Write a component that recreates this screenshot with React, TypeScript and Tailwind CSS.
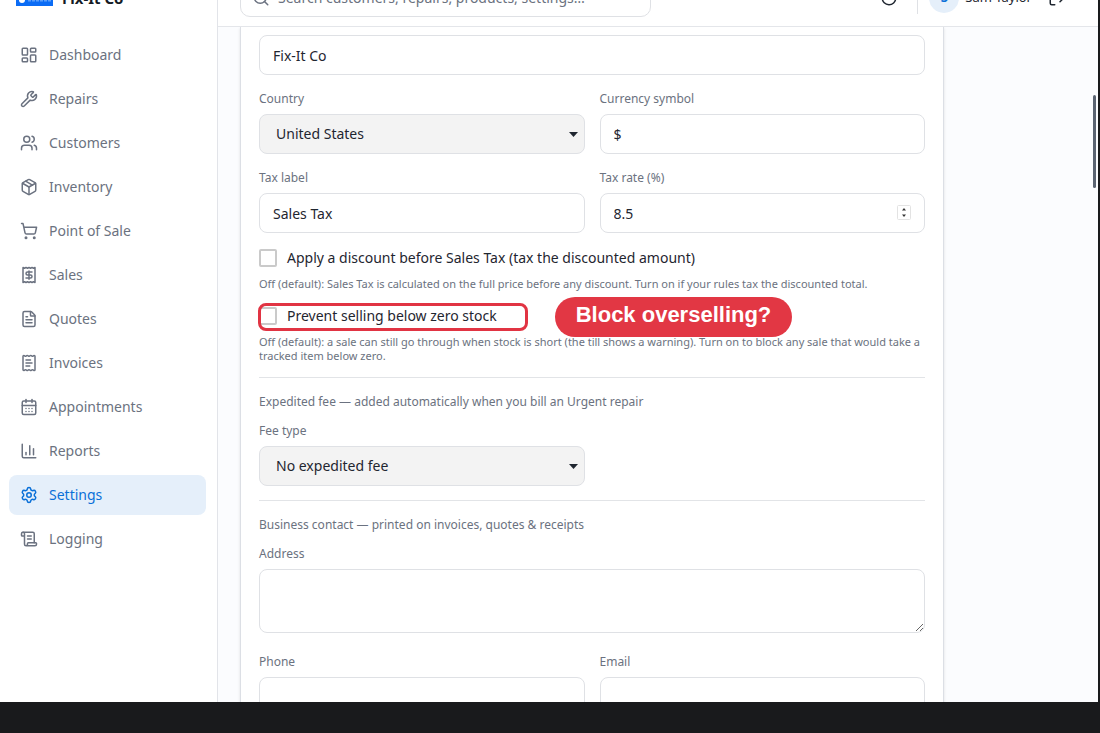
import type { ReactNode } from "react";
import {
  CalendarDays,
  ChartColumn,
  FileText,
  LayoutDashboard,
  LogOut,
  Moon,
  Package,
  Receipt,
  ReceiptText,
  ScrollText,
  Search,
  Settings,
  ShoppingCart,
  Users,
  Wrench,
} from "lucide-react";

const navItems = [
  { label: "Dashboard", icon: LayoutDashboard },
  { label: "Repairs", icon: Wrench },
  { label: "Customers", icon: Users },
  { label: "Inventory", icon: Package },
  { label: "Point of Sale", icon: ShoppingCart },
  { label: "Sales", icon: Receipt },
  { label: "Quotes", icon: FileText },
  { label: "Invoices", icon: ReceiptText },
  { label: "Appointments", icon: CalendarDays },
  { label: "Reports", icon: ChartColumn },
  { label: "Settings", icon: Settings, active: true },
  { label: "Logging", icon: ScrollText },
];

const control =
  "block w-full rounded-lg border border-[#dfe1e5] bg-white px-[13px] text-sm text-[#1f2630] outline-none";

function Sidebar() {
  return (
    <aside className="flex w-[218px] shrink-0 flex-col border-r border-[#e2e4e9] bg-white">
      <div className="flex h-[58px] shrink-0 items-center gap-[9px] pl-4">
        <svg width="37" height="15" viewBox="0 0 37 15" aria-hidden="true">
          <rect width="37" height="15" fill="#0b6cf5" />
          <circle cx="6" cy="9" r="3" fill="#fff" />
          <path d="M12 9.5h23" stroke="#5c9ffa" strokeWidth="2" strokeDasharray="3 1" />
        </svg>
        <span className="text-[15px] font-bold text-[#151b26]">Fix-It Co</span>
      </div>
      <nav className="flex flex-col gap-1 pt-2 pr-[11px] pl-[9px]">
        {navItems.map(({ label, icon: Icon, active }) => (
          <a
            key={label}
            href="#"
            className={`flex h-10 items-center gap-[11px] rounded-lg px-[11px] text-sm ${
              active ? "bg-[#e5effa] text-[#0a70d8]" : "text-[#6b7280]"
            }`}
          >
            <Icon size={18} strokeWidth={2} />
            {label}
          </a>
        ))}
      </nav>
    </aside>
  );
}

function Header() {
  return (
    <header className="flex h-[58px] shrink-0 items-center justify-between border-b border-[#e4e6ea] bg-white pr-8 pl-[22px]">
      <label className="flex h-[38px] w-[411px] items-center gap-2 rounded-[10px] border border-[#dfe1e5] px-[11px] text-[#6b7280]">
        <Search size={18} />
        <input
          type="search"
          aria-label="Search"
          placeholder="Search customers, repairs, products, settings…"
          className="min-w-0 flex-1 text-sm outline-none placeholder:text-[#6b7280]"
        />
      </label>
      <div className="flex items-center text-[#1f2630]">
        <button type="button" aria-label="Toggle theme" className="mr-[19px]">
          <Moon size={18} />
        </button>
        <div className="mr-[11px] h-8 w-px bg-[#dfe1e5]" />
        <span className="mr-1.5 flex size-[30px] items-center justify-center rounded-full bg-[#e5effa] text-[13px] font-bold text-[#0a70d8]">
          S
        </span>
        <span className="mr-4 text-[13px]">Sam Taylor</span>
        <button type="button" aria-label="Log out">
          <LogOut size={18} />
        </button>
      </div>
    </header>
  );
}

function Field({ id, label, children }: { id: string; label: string; children: ReactNode }) {
  return (
    <div>
      <label htmlFor={id} className="mb-1.5 block text-xs leading-[18px] text-[#6b7280]">
        {label}
      </label>
      {children}
    </div>
  );
}

function SelectBox({ id, value }: { id: string; value: string }) {
  return (
    <div className="relative">
      <select
        id={id}
        className="block h-10 w-full appearance-none rounded-lg border border-[#dfe1e5] bg-[#f3f3f3] px-4 text-sm text-[#1f2630] outline-none"
      >
        <option>{value}</option>
      </select>
      <svg
        className="pointer-events-none absolute top-[18px] right-[7px]"
        width="9"
        height="5"
        viewBox="0 0 9 5"
        aria-hidden="true"
      >
        <path d="M0 0h9L4.5 5z" fill="#1f2630" />
      </svg>
    </div>
  );
}

function CheckRow({ label, children }: { label: string; children?: ReactNode }) {
  return (
    <div className="relative mt-[15px]">
      <label className="flex h-5 items-center gap-2.5 text-sm text-[#1f2630]">
        <input
          type="checkbox"
          className="size-[18px] appearance-none rounded-xs border-2 border-[#cacaca] bg-white"
        />
        {label}
      </label>
      {children}
    </div>
  );
}

function Hint({ children }: { children: ReactNode }) {
  return <p className="mt-[9px] text-[11px] leading-[14px] text-[#6b7280]">{children}</p>;
}

function SectionTitle({ children }: { children: ReactNode }) {
  return (
    <p className="mt-3.5 mb-[11px] border-t border-[#e2e4e7] pt-[15px] text-xs leading-[18px] text-[#6b7280]">
      {children}
    </p>
  );
}

function BusinessForm() {
  return (
    <form className="min-h-full max-w-[704px] border-x border-[#dcdfe5] bg-white px-[18px] pt-2 shadow-sm">
      <input aria-label="Business name" defaultValue="Fix-It Co" className={`${control} h-10`} />

      <div className="mt-[15px] grid grid-cols-2 gap-[15px]">
        <Field id="country" label="Country">
          <SelectBox id="country" value="United States" />
        </Field>
        <Field id="currency" label="Currency symbol">
          <input id="currency" defaultValue="$" className={`${control} h-10`} />
        </Field>
        <Field id="tax-label" label="Tax label">
          <input id="tax-label" defaultValue="Sales Tax" className={`${control} h-10`} />
        </Field>
        <Field id="tax-rate" label="Tax rate (%)">
          <div className="relative">
            <input
              id="tax-rate"
              inputMode="decimal"
              defaultValue="8.5"
              className={`${control} h-10`}
            />
            <svg
              className="absolute top-3 right-3.5"
              width="14"
              height="15"
              viewBox="0 0 14 15"
              aria-hidden="true"
            >
              <rect x="0.5" y="0.5" width="13" height="14" rx="1" fill="#fff" stroke="#e3e3e3" />
              <path d="M5 5.5 7 3l2 2.5zM5 9.5 7 12l2-2.5z" fill="#333" />
            </svg>
          </div>
        </Field>
      </div>

      <CheckRow label="Apply a discount before Sales Tax (tax the discounted amount)" />
      <Hint>
        Off (default): Sales Tax is calculated on the full price before any discount. Turn on if
        your rules tax the discounted total.
      </Hint>

      <CheckRow label="Prevent selling below zero stock">
        <div className="pointer-events-none absolute -top-[3px] -left-px h-7 w-[270px] rounded-lg border-[3px] border-[#e13443]" />
        <div className="absolute -top-[9px] left-[296px] flex h-10 w-[237px] justify-center rounded-full bg-[#e23744] font-['Liberation_Sans',sans-serif] text-[22px] leading-[35px] font-bold text-white">
          Block overselling?
        </div>
      </CheckRow>
      <Hint>
        Off (default): a sale can still go through when stock is short (the till shows a warning).
        Turn on to block any sale that would take a tracked item below zero.
      </Hint>

      <SectionTitle>Expedited fee — added automatically when you bill an Urgent repair</SectionTitle>
      <div className="grid grid-cols-2 gap-[15px]">
        <Field id="fee-type" label="Fee type">
          <SelectBox id="fee-type" value="No expedited fee" />
        </Field>
      </div>

      <SectionTitle>Business contact — printed on invoices, quotes &amp; receipts</SectionTitle>
      <Field id="address" label="Address">
        <textarea id="address" className={`${control} h-16 resize-y py-2`} />
      </Field>
      <div className="mt-5 grid grid-cols-2 gap-[15px]">
        <Field id="phone" label="Phone">
          <input id="phone" type="tel" className={`${control} h-10`} />
        </Field>
        <Field id="email" label="Email">
          <input id="email" type="email" className={`${control} h-10`} />
        </Field>
      </div>
    </form>
  );
}

export default function App() {
  return (
    <div className="flex h-screen flex-col overflow-hidden bg-[#191a1c] pr-0.5 pb-[31px] font-['Noto_Sans',sans-serif]">
      <div className="flex min-h-0 flex-1 overflow-hidden bg-white">
        <div className="-mt-[31px] flex min-w-0 flex-1">
          <Sidebar />
          <div className="flex min-w-0 flex-1 flex-col">
            <Header />
            <main className="relative min-h-0 flex-1 overflow-hidden bg-[#fbfcfe] px-[22px]">
              <BusinessForm />
              <div className="absolute top-[68px] right-[2px] h-[93px] w-[3px] rounded-full bg-[#5b6472]" />
            </main>
          </div>
        </div>
      </div>
    </div>
  );
}
